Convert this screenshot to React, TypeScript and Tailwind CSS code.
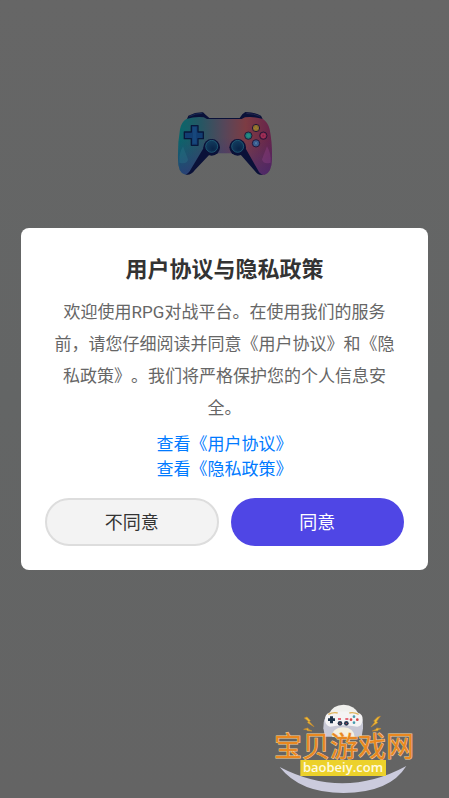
import React from "react";

function Controller() {
  return (
    <svg viewBox="0 0 360 255" className="h-[85px] w-[120px]" role="img" aria-label="RPG">
      <defs>
        <linearGradient id="body" x1="0" y1="0" x2="1" y2="0">
          <stop offset="0" stopColor="#08676b" />
          <stop offset="0.25" stopColor="#275663" />
          <stop offset="0.5" stopColor="#574659" />
          <stop offset="0.72" stopColor="#7d3c43" />
          <stop offset="1" stopColor="#65224b" />
        </linearGradient>
        <linearGradient id="shade" x1="0" y1="0" x2="0" y2="1">
          <stop offset="0.35" stopColor="#3b2f80" stopOpacity="0" />
          <stop offset="1" stopColor="#3a2a7c" stopOpacity="0.6" />
        </linearGradient>
        <radialGradient id="stick" cx="0.6" cy="0.7" r="0.7">
          <stop offset="0" stopColor="#092448" />
          <stop offset="1" stopColor="#123c5e" />
        </radialGradient>
      </defs>
      <path d="M66 57 L70 47 Q92 36 114 37 L120 43 L133 54 L224 54 L232 43 L241 36 Q272 37 288 47 L293 57 Z" fill="#0a1138" />
      <path d="M73 49 Q92 40 112 40" fill="none" stroke="#203661" strokeWidth="2" />
      <path d="M244 40 Q268 41 285 49" fill="none" stroke="#312f58" strokeWidth="2" />
      <path d="M64 57 Q91 49 116 52 L126 57 L230 57 L240 52 Q267 49 294 57 Q309 67 314 88 Q322 128 321 178 Q320 218 299 224 Q287 227 277 212 L237 144 L232 160 L126 160 L119 144 L81 211 Q71 226 59 223 Q39 218 39 178 Q38 128 45 88 Q49 66 64 57Z" fill="url(#body)" />
      <path d="M64 57 Q91 49 116 52 L126 57 L230 57 L240 52 Q267 49 294 57 Q309 67 314 88 Q322 128 321 178 Q320 218 299 224 Q287 227 277 212 L237 144 L232 160 L126 160 L119 144 L81 211 Q71 226 59 223 Q39 218 39 178 Q38 128 45 88 Q49 66 64 57Z" fill="url(#shade)" />
      <path d="M118 140 L74 214 Q69 222 62 224 Q78 227 89 211 L133 164 Z M239 140 L279 211 Q286 225 296 224 Q279 227 269 212 L227 164 Z" fill="#0a1138" />
      <path d="M54 139 L69 178 Q67 194 43 188 Q41 160 54 139Z" fill="#2e7d90" opacity="0.3" />
      <path d="M306 139 L291 178 Q294 194 317 188 Q319 160 306 139Z" fill="#a04a91" opacity="0.3" />
      <path d="M79 77 H99 V96 H115 V116 H99 V136 H79 V116 H58 V96 H79Z" fill="#123e72" stroke="#09173b" strokeWidth="4" strokeLinejoin="round" />
      <path d="M84 81 H94 V131 H84Z" fill="#17477c" />
      <g stroke="#24183a" strokeWidth="3">
        <circle cx="273" cy="84" r="11" fill="#8a6b2b" />
        <circle cx="250" cy="107" r="11" fill="#1b7776" />
        <circle cx="295" cy="107" r="11" fill="#8c2149" />
        <circle cx="273" cy="130" r="11" fill="#36598d" />
      </g>
      <path d="M268 87 L273 79 L278 87Z" fill="none" stroke="#a98a38" strokeWidth="2" />
      <path d="M269 126 L277 134 M277 126 L269 134" stroke="#6a8fae" strokeWidth="2" />
      <circle cx="250" cy="107" r="6" fill="#278b84" />
      <rect x="290" y="102" width="10" height="10" rx="3" fill="none" stroke="#b0466a" strokeWidth="2" />
      {[140, 218].map((x) => (
        <g key={x}>
          <circle cx={x} cy="142" r="25" fill="#0a1138" />
          <circle cx={x} cy="139" r="18" fill="url(#stick)" stroke="#266c83" strokeWidth="2" />
        </g>
      ))}
    </svg>
  );
}

function SiteMark() {
  return (
    <svg viewBox="0 0 160 103" className="absolute right-6 bottom-0 h-[103px] w-[160px]" role="img" aria-label="宝贝游戏网 baobeiy.com">
      <g transform="scale(0.33333)">
        <path d="M44 216 Q235 315 424 213 Q375 293 235 294 Q105 294 44 216Z" fill="#cbcbdd" />
        <path d="M191 58 Q202 30 236 29 Q270 31 281 57Z" fill="#f0f0ed" />
        <path d="M188 60 Q236 45 282 60 Q296 70 294 100 L290 125 H180 L175 100 Q175 67 188 60Z" fill="#c7c8d5" />
        <path d="M192 53 Q236 46 279 53 Q294 57 293 74 Q292 92 277 95 Q235 86 195 95 Q180 91 180 74 Q180 57 192 53Z" fill="#f4f3f4" />
        <path d="M202 126 Q200 99 235 97 Q267 99 269 126Z" fill="#f5f1df" />
        <path d="M190 58 Q204 51 218 54 M253 54 Q267 51 281 58" stroke="#dfb45c" strokeWidth="4" fill="none" />
        <path d="M195 64 h9 v6 h6 v8 h-6 v7 h-9 v-7 h-6 v-8 h6Z" fill="#1c3349" />
        <circle cx="267" cy="65" r="4" fill="#459bae" />
        <circle cx="267" cy="83" r="4" fill="#459bae" />
        <circle cx="258" cy="74" r="4" fill="#d44346" />
        <circle cx="277" cy="74" r="4" fill="#d44346" />
        <path d="M219 72 h9 M241 72 h9" stroke="#df3d50" strokeWidth="4" />
        <circle cx="225" cy="85" r="7" fill="#263a50" />
        <circle cx="244" cy="85" r="7" fill="#263a50" />
        <circle cx="225" cy="85" r="2" fill="#c44b57" />
        <circle cx="244" cy="85" r="2" fill="#c44b57" />
        <g fill="#eebc35" stroke="#c98a2e" strokeWidth="2">
          <path d="M118 69 L126 66 L136 77 L133 80 L147 95 L128 83 L130 79Z" />
          <path d="M116 103 L129 99 L130 103 L141 108 L127 107 L125 104Z" />
          <path d="M346 64 L337 67 L326 78 L330 81 L318 96 L338 83 L335 79Z" />
          <path d="M348 101 L335 99 L333 103 L322 108 L338 107 L340 104Z" />
        </g>
        <rect x="106" y="195" width="257" height="48" fill="#ecd12b" />
      </g>
      <text x="79" y="62" textAnchor="middle" className="fill-[#e98820] stroke-[#f6cf9b] font-['Noto_Sans_CJK_SC',sans-serif] text-[28px] font-normal [paint-order:stroke] [stroke-width:1px]">
        宝贝游戏网
      </text>
      <text x="78" y="77" textAnchor="middle" className="fill-[#fffbe0] font-['Open_Sans',sans-serif] text-[13px] font-semibold">
        baobeiy.com
      </text>
    </svg>
  );
}

export default function App() {
  return (
    <main className="relative flex min-h-screen flex-col items-center justify-center bg-linear-to-b from-[#666666] via-[#636565] to-[#646464] font-[Roboto,'Noto_Sans_CJK_SC',sans-serif] [text-spacing-trim:space-all]">
      <div className="absolute inset-x-0 top-[100px] flex justify-center">
        <Controller />
      </div>
      <div className="w-full px-[21px]">
        <section role="dialog" aria-labelledby="title" className="rounded-lg bg-white p-6 text-center">
          <h1 id="title" className="text-[22px] leading-9 font-bold text-[#333333]">用户协议与隐私政策</h1>
          <p className="mt-2 px-1 text-[17px] leading-8 text-[#666666]">
            欢迎使用RPG对战平台。在使用我们的服务前，请您仔细阅读并同意《用户协议》和《隐私政策》。我们将严格保护您的个人信息安全。
          </p>
          <nav className="mt-2 flex flex-col items-center text-[17px] leading-[25px] text-[#007aff]">
            <a href="#agreement">查看《用户协议》</a>
            <a href="#privacy">查看《隐私政策》</a>
          </nav>
          <div className="mt-4 grid grid-cols-2 gap-3 text-[18px]">
            <button type="button" className="h-12 rounded-full border-2 border-[#dddddd] bg-[#f3f3f3] text-[#333333]">不同意</button>
            <button type="button" className="h-12 rounded-full bg-[#4f46e5] text-white">同意</button>
          </div>
        </section>
      </div>
      <SiteMark />
    </main>
  );
}
